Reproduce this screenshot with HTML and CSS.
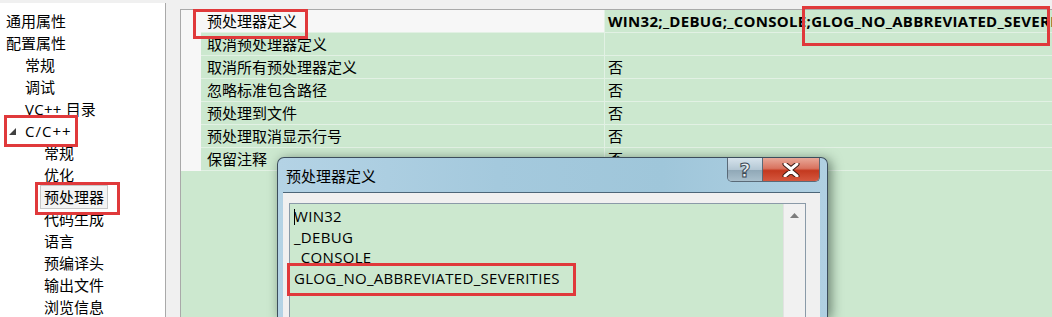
FILE: index.html
```html
<!DOCTYPE html>
<html lang="zh-CN">

<head>
  <meta charset="UTF-8">
  <title>属性页 - 预处理器</title>
  <link rel="stylesheet" href="styles.css">
</head>

<body>
  <div class="page">
    <aside class="tree">
      <div class="node">通用属性</div>
      <div class="node">配置属性</div>
      <div class="node lvl1">常规</div>
      <div class="node lvl1">调试</div>
      <div class="node lvl1"><span class="latin">VC++</span>&nbsp;目录</div>
      <div class="node open">
        <svg class="twisty" width="7" height="7" viewBox="0 0 7 7"><polygon points="7,0 7,7 0,7" fill="#404040"/></svg>
        <span class="latin wide">C/C++</span>
      </div>
      <div class="node lvl2">常规</div>
      <div class="node lvl2">优化</div>
      <div class="node lvl2"><span class="current">预处理器</span></div>
      <div class="node lvl2">代码生成</div>
      <div class="node lvl2">语言</div>
      <div class="node lvl2">预编译头</div>
      <div class="node lvl2">输出文件</div>
      <div class="node lvl2">浏览信息</div>
    </aside>

    <main class="props">
      <div class="prop active">
        <div class="name">预处理器定义</div>
        <div class="value strong">WIN32;_DEBUG;_CONSOLE;GLOG_NO_ABBREVIATED_SEVERITIES</div>
      </div>
      <div class="prop">
        <div class="name">取消预处理器定义</div>
        <div class="value"></div>
      </div>
      <div class="prop">
        <div class="name">取消所有预处理器定义</div>
        <div class="value">否</div>
      </div>
      <div class="prop">
        <div class="name">忽略标准包含路径</div>
        <div class="value">否</div>
      </div>
      <div class="prop">
        <div class="name">预处理到文件</div>
        <div class="value">否</div>
      </div>
      <div class="prop">
        <div class="name">预处理取消显示行号</div>
        <div class="value">否</div>
      </div>
      <div class="prop">
        <div class="name">保留注释</div>
        <div class="value">否</div>
      </div>
    </main>
  </div>

  <!-- the edit dialog opened over the grid -->
  <div class="dialog">
    <div class="titlebar">
      <span class="title">预处理器定义</span>
      <div class="caption-buttons">
        <div class="cap-btn help">?</div>
        <div class="cap-btn close">
          <svg width="18" height="14" viewBox="0 0 18 14">
            <path d="M3 1 L9 6 L15 1 M3 13 L9 8 L15 13" fill="none" stroke="#3a1a14" stroke-width="5" stroke-linecap="round"/>
            <path d="M3 1 L9 6 L15 1 M3 13 L9 8 L15 13" fill="none" stroke="#ffffff" stroke-width="3" stroke-linecap="round"/>
          </svg>
        </div>
      </div>
    </div>
    <div class="client">
      <div class="editbox">
        <div class="lines">
          <div class="line"><span class="caret"></span>WIN32</div>
          <div class="line">_DEBUG</div>
          <div class="line">_CONSOLE</div>
          <div class="line">GLOG_NO_ABBREVIATED_SEVERITIES</div>
        </div>
        <div class="vscroll">
          <svg width="9" height="5" viewBox="0 0 9 5"><polygon points="0,5 4.5,0 9,5" fill="#7d7d7d"/></svg>
        </div>
      </div>
    </div>
  </div>

  <!-- red annotation boxes -->
  <div class="mark mark-def"></div>
  <div class="mark mark-value"></div>
  <div class="mark mark-cpp"></div>
  <div class="mark mark-pre"></div>
  <div class="mark mark-glog"></div>
</body>

</html>
```

FILE: styles.css
```css
body {
  margin: 0;
  width: 1052px;
  height: 317px;
  overflow: hidden;
  position: relative;
  background-color: #f0f0f0;
  font-family: "Open Sans", "Noto Sans CJK SC", sans-serif;
  font-size: 15px;
  color: #000;
}

.latin {
  letter-spacing: 0.3px;
}

.latin.wide {
  letter-spacing: 1px;
}

.page {
  display: flex;
  gap: 14px;
  height: 100%;
}

/* left tree */

.tree {
  width: 165px;
  flex-shrink: 0;
  margin-top: 3px;
  padding-top: 7px;
  background: #fff;
  border-right: 1px solid #a9a9a9;
}

.node {
  height: 22px;
  line-height: 22px;
  padding-left: 6px;
  white-space: nowrap;
  display: flex;
  align-items: center;
}

.node.lvl1 {
  padding-left: 25px;
}

.node.lvl2 {
  padding-left: 44px;
}

.node.open {
  padding-left: 9px;
}

.node .twisty {
  margin-right: 9px;
}

.node .current {
  margin-left: -4px;
  padding: 0 3px;
  line-height: 22px;
  background: #f3f3f3;
  border: 1px solid #c8c8c8;
}

/* property grid */

.props {
  flex: 1;
  min-width: 0;
  margin-top: 9px;
  border-top: 1px solid #a9a9a9;
  border-left: 1px solid #a9a9a9;
  background: #cce8cf;
  overflow: hidden;
}

.prop {
  display: flex;
  height: 23px;
  line-height: 22px;
  border-left: 20px solid #f7f7f7;
}

.prop .name {
  width: 397px;
  flex-shrink: 0;
  padding-left: 6px;
  border-bottom: 1px solid #e2f1e4;
  border-right: 1px solid #e2f1e4;
}

.prop .value {
  flex: 1;
  min-width: 0;
  padding-left: 3px;
  white-space: nowrap;
  overflow: hidden;
  text-overflow: clip;
  border-bottom: 1px solid #e2f1e4;
}

.prop.active .name {
  background: #f7f7f7;
}

.value.strong {
  font-weight: bold;
  letter-spacing: 0.3px;
}

/* dialog */

.dialog {
  position: absolute;
  left: 277px;
  top: 157px;
  width: 549px;
  height: 159px;
  border: 1px solid #3c4d5c;
  border-bottom: none;
  border-radius: 7px 7px 0 0;
  background: linear-gradient(90deg, #b4d3e5 0%, #a4c9dd 40%, #9fc6da 70%, #b0d0e2 100%);
  box-shadow: 3px 2px 12px rgba(20, 40, 30, 0.55);
  overflow: hidden;
}

.titlebar {
  display: flex;
  justify-content: space-between;
  height: 34px;
  padding-left: 8px;
  padding-right: 7px;
}

.title {
  line-height: 36px;
}

.caption-buttons {
  display: flex;
  height: 23px;
  border: 1px solid #5a6a78;
  border-top: none;
  border-radius: 0 0 5px 5px;
  overflow: hidden;
}

.cap-btn {
  display: flex;
  align-items: center;
  justify-content: center;
}

.cap-btn.help {
  width: 34px;
  border-right: 1px solid #5a6a78;
  background: linear-gradient(#d6e3ec 0%, #b4c7d4 50%, #8fa7b6 51%, #a9bfcc 100%);
  font-family: "DejaVu Sans", sans-serif;
  font-size: 19px;
  font-weight: bold;
  color: #e8eef2;
  -webkit-text-stroke: 1px #3c4a56;
}

.cap-btn.close {
  width: 56px;
  background: linear-gradient(#e8a898 0%, #d9735f 45%, #c4391f 55%, #d4573e 100%);
}

.client {
  margin: 0 7px 0 5px;
  height: 125px;
  border-top: 1px solid #4c6678;
  background: #f0f0f0;
  padding: 10px 14px 0 6px;
}

.editbox {
  display: flex;
  height: 120px;
  border: 1px solid #8a9aa8;
  background: #cce8cf;
}

.lines {
  flex: 1;
  padding: 2px 0 0 4px;
  font-size: 15px;
  letter-spacing: 0.3px;
}

.line {
  height: 20.5px;
  line-height: 20.5px;
  position: relative;
}

.caret {
  position: absolute;
  left: 0;
  top: 3px;
  width: 1px;
  height: 16px;
  background: #000;
}

.vscroll {
  width: 21px;
  background: #f1f1f1;
  border-left: 1px solid #e2e2e2;
  display: flex;
  justify-content: center;
  padding-top: 9px;
  align-items: flex-start;
}

/* annotations */

.mark {
  position: absolute;
  border: 3px solid #e0393b;
}

.mark-def {
  left: 193px;
  top: 9px;
  width: 109px;
  height: 24px;
}

.mark-value {
  left: 802px;
  top: 6px;
  width: 242px;
  height: 34px;
}

.mark-cpp {
  left: 4px;
  top: 115px;
  width: 68px;
  height: 26px;
}

.mark-pre {
  left: 35px;
  top: 182px;
  width: 79px;
  height: 27px;
}

.mark-glog {
  left: 287px;
  top: 263px;
  width: 283px;
  height: 27px;
}
```
